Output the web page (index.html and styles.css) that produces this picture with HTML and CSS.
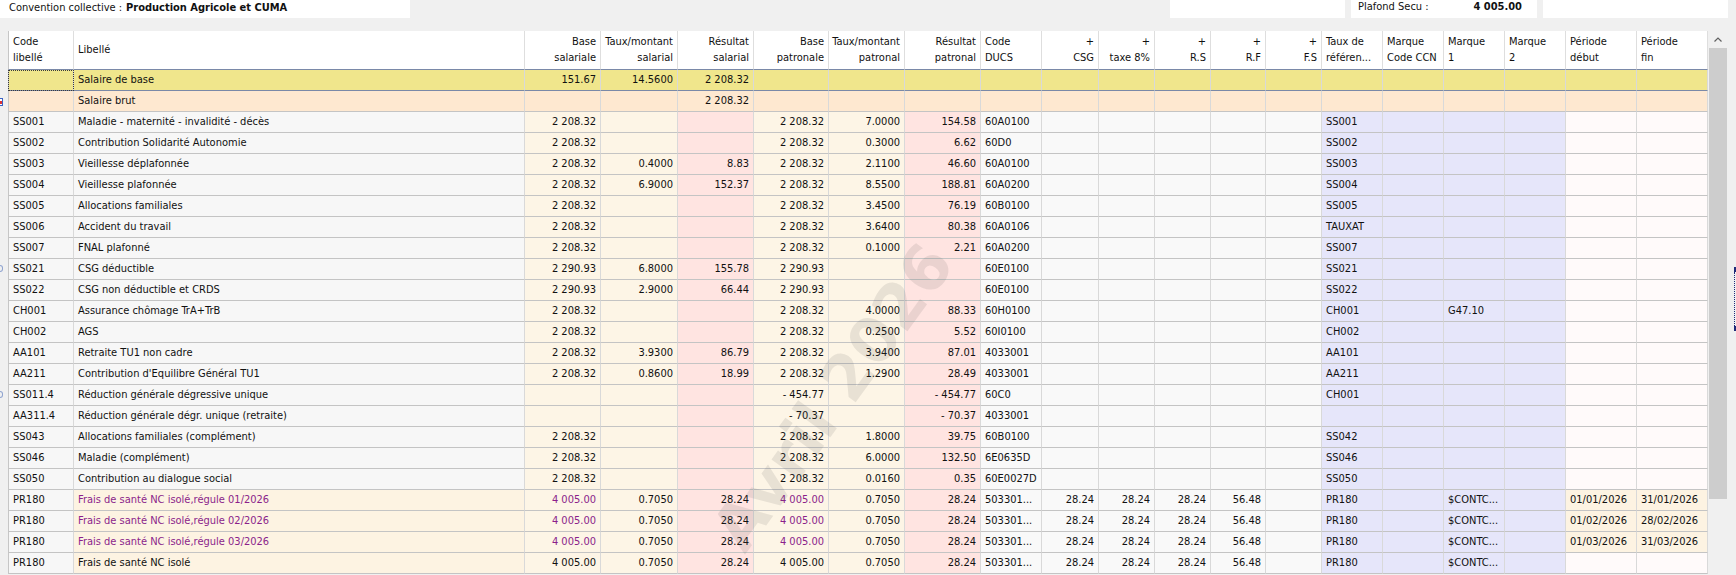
FILE: index.html
```html
<!DOCTYPE html>
<html lang="fr">
<head>
<meta charset="utf-8">
<title>Cotisations</title>
<link rel="stylesheet" href="styles.css">
</head>
<body>
<div class="top">
  <div class="box box-cc"><span class="lbl">Convention collective :</span><b>Production Agricole et CUMA</b></div>
  <div class="box box-a"></div>
  <div class="box box-b"><span class="lbl">Plafond Secu :</span><b class="val">4 005.00</b></div>
  <div class="box box-c"></div>
</div>
<div class="main">
  <div class="grid">
    <div class="row hdr"><div class="g"></div><div><div>Code<br>libellé</div></div><div><div>Libellé</div></div><div><div>Base<br>salariale</div></div><div><div>Taux/montant<br>salarial</div></div><div><div>Résultat<br>salarial</div></div><div><div>Base<br>patronale</div></div><div><div>Taux/montant<br>patronal</div></div><div><div>Résultat<br>patronal</div></div><div><div>Code<br>DUCS</div></div><div><div>+<br>CSG</div></div><div><div>+<br>taxe 8%</div></div><div><div>+<br>R.S</div></div><div><div>+<br>R.F</div></div><div><div>+<br>F.S</div></div><div><div>Taux de<br>référen...</div></div><div><div>Marque<br>Code CCN</div></div><div><div>Marque<br>1</div></div><div><div>Marque<br>2</div></div><div><div>Période<br>début</div></div><div><div>Période<br>fin</div></div></div>

    <div class="row sel"><span class="g"></span><span class="focus"></span><span>Salaire de base</span><span>151.67</span><span>14.5600</span><span>2 208.32</span><span></span><span></span><span></span><span></span><span></span><span></span><span></span><span></span><span></span><span></span><span></span><span></span><span></span><span></span><span></span></div>
    <div class="row brut"><span class="g"><b class="mk-box"></b></span><span></span><span>Salaire brut</span><span></span><span></span><span>2 208.32</span><span></span><span></span><span></span><span></span><span></span><span></span><span></span><span></span><span></span><span></span><span></span><span></span><span></span><span></span><span></span></div>
    <div class="row r"><span class="g"></span><span>SS001</span><span>Maladie - maternité - invalidité - décès</span><span>2 208.32</span><span></span><span></span><span>2 208.32</span><span>7.0000</span><span>154.58</span><span>60A0100</span><span></span><span></span><span></span><span></span><span></span><span>SS001</span><span></span><span></span><span></span><span></span><span></span></div>
    <div class="row r"><span class="g"></span><span>SS002</span><span>Contribution Solidarité Autonomie</span><span>2 208.32</span><span></span><span></span><span>2 208.32</span><span>0.3000</span><span>6.62</span><span>60D0</span><span></span><span></span><span></span><span></span><span></span><span>SS002</span><span></span><span></span><span></span><span></span><span></span></div>
    <div class="row r"><span class="g"></span><span>SS003</span><span>Vieillesse déplafonnée</span><span>2 208.32</span><span>0.4000</span><span>8.83</span><span>2 208.32</span><span>2.1100</span><span>46.60</span><span>60A0100</span><span></span><span></span><span></span><span></span><span></span><span>SS003</span><span></span><span></span><span></span><span></span><span></span></div>
    <div class="row r"><span class="g"></span><span>SS004</span><span>Vieillesse plafonnée</span><span>2 208.32</span><span>6.9000</span><span>152.37</span><span>2 208.32</span><span>8.5500</span><span>188.81</span><span>60A0200</span><span></span><span></span><span></span><span></span><span></span><span>SS004</span><span></span><span></span><span></span><span></span><span></span></div>
    <div class="row r"><span class="g"></span><span>SS005</span><span>Allocations familiales</span><span>2 208.32</span><span></span><span></span><span>2 208.32</span><span>3.4500</span><span>76.19</span><span>60B0100</span><span></span><span></span><span></span><span></span><span></span><span>SS005</span><span></span><span></span><span></span><span></span><span></span></div>
    <div class="row r"><span class="g"></span><span>SS006</span><span>Accident du travail</span><span>2 208.32</span><span></span><span></span><span>2 208.32</span><span>3.6400</span><span>80.38</span><span>60A0106</span><span></span><span></span><span></span><span></span><span></span><span>TAUXAT</span><span></span><span></span><span></span><span></span><span></span></div>
    <div class="row r"><span class="g"></span><span>SS007</span><span>FNAL plafonné</span><span>2 208.32</span><span></span><span></span><span>2 208.32</span><span>0.1000</span><span>2.21</span><span>60A0200</span><span></span><span></span><span></span><span></span><span></span><span>SS007</span><span></span><span></span><span></span><span></span><span></span></div>
    <div class="row r"><span class="g"><b class="mk-circ"></b></span><span>SS021</span><span>CSG déductible</span><span>2 290.93</span><span>6.8000</span><span>155.78</span><span>2 290.93</span><span></span><span></span><span>60E0100</span><span></span><span></span><span></span><span></span><span></span><span>SS021</span><span></span><span></span><span></span><span></span><span></span></div>
    <div class="row r"><span class="g"></span><span>SS022</span><span>CSG non déductible et CRDS</span><span>2 290.93</span><span>2.9000</span><span>66.44</span><span>2 290.93</span><span></span><span></span><span>60E0100</span><span></span><span></span><span></span><span></span><span></span><span>SS022</span><span></span><span></span><span></span><span></span><span></span></div>
    <div class="row r"><span class="g"></span><span>CH001</span><span>Assurance chômage TrA+TrB</span><span>2 208.32</span><span></span><span></span><span>2 208.32</span><span>4.0000</span><span>88.33</span><span>60H0100</span><span></span><span></span><span></span><span></span><span></span><span>CH001</span><span></span><span>G47.10</span><span></span><span></span><span></span></div>
    <div class="row r"><span class="g"></span><span>CH002</span><span>AGS</span><span>2 208.32</span><span></span><span></span><span>2 208.32</span><span>0.2500</span><span>5.52</span><span>60I0100</span><span></span><span></span><span></span><span></span><span></span><span>CH002</span><span></span><span></span><span></span><span></span><span></span></div>
    <div class="row r"><span class="g"></span><span>AA101</span><span>Retraite TU1 non cadre</span><span>2 208.32</span><span>3.9300</span><span>86.79</span><span>2 208.32</span><span>3.9400</span><span>87.01</span><span>4033001</span><span></span><span></span><span></span><span></span><span></span><span>AA101</span><span></span><span></span><span></span><span></span><span></span></div>
    <div class="row r"><span class="g"></span><span>AA211</span><span>Contribution d'Equilibre Général TU1</span><span>2 208.32</span><span>0.8600</span><span>18.99</span><span>2 208.32</span><span>1.2900</span><span>28.49</span><span>4033001</span><span></span><span></span><span></span><span></span><span></span><span>AA211</span><span></span><span></span><span></span><span></span><span></span></div>
    <div class="row r"><span class="g"><b class="mk-circ"></b></span><span>SS011.4</span><span>Réduction générale dégressive unique</span><span></span><span></span><span></span><span>- 454.77</span><span></span><span>- 454.77</span><span>60C0</span><span></span><span></span><span></span><span></span><span></span><span>CH001</span><span></span><span></span><span></span><span></span><span></span></div>
    <div class="row r"><span class="g"></span><span>AA311.4</span><span>Réduction générale dégr. unique (retraite)</span><span></span><span></span><span></span><span>- 70.37</span><span></span><span>- 70.37</span><span>4033001</span><span></span><span></span><span></span><span></span><span></span><span></span><span></span><span></span><span></span><span></span><span></span></div>
    <div class="row r"><span class="g"></span><span>SS043</span><span>Allocations familiales (complément)</span><span>2 208.32</span><span></span><span></span><span>2 208.32</span><span>1.8000</span><span>39.75</span><span>60B0100</span><span></span><span></span><span></span><span></span><span></span><span>SS042</span><span></span><span></span><span></span><span></span><span></span></div>
    <div class="row r"><span class="g"></span><span>SS046</span><span>Maladie (complément)</span><span>2 208.32</span><span></span><span></span><span>2 208.32</span><span>6.0000</span><span>132.50</span><span>6E0635D</span><span></span><span></span><span></span><span></span><span></span><span>SS046</span><span></span><span></span><span></span><span></span><span></span></div>
    <div class="row r"><span class="g"></span><span>SS050</span><span>Contribution au dialogue social</span><span>2 208.32</span><span></span><span></span><span>2 208.32</span><span>0.0160</span><span>0.35</span><span>60E0027D</span><span></span><span></span><span></span><span></span><span></span><span>SS050</span><span></span><span></span><span></span><span></span><span></span></div>
    <div class="row r"><span class="g"></span><span>PR180</span><span class="cr p">Frais de santé NC isolé,régule 01/2026</span><span class="p">4 005.00</span><span>0.7050</span><span>28.24</span><span class="p">4 005.00</span><span>0.7050</span><span>28.24</span><span>503301...</span><span>28.24</span><span>28.24</span><span>28.24</span><span>56.48</span><span></span><span>PR180</span><span></span><span>$CONTC...</span><span></span><span class="cr">01/01/2026</span><span class="cr">31/01/2026</span></div>
    <div class="row r"><span class="g"></span><span>PR180</span><span class="cr p">Frais de santé NC isolé,régule 02/2026</span><span class="p">4 005.00</span><span>0.7050</span><span>28.24</span><span class="p">4 005.00</span><span>0.7050</span><span>28.24</span><span>503301...</span><span>28.24</span><span>28.24</span><span>28.24</span><span>56.48</span><span></span><span>PR180</span><span></span><span>$CONTC...</span><span></span><span class="cr">01/02/2026</span><span class="cr">28/02/2026</span></div>
    <div class="row r"><span class="g"></span><span>PR180</span><span class="cr p">Frais de santé NC isolé,régule 03/2026</span><span class="p">4 005.00</span><span>0.7050</span><span>28.24</span><span class="p">4 005.00</span><span>0.7050</span><span>28.24</span><span>503301...</span><span>28.24</span><span>28.24</span><span>28.24</span><span>56.48</span><span></span><span>PR180</span><span></span><span>$CONTC...</span><span></span><span class="cr">01/03/2026</span><span class="cr">31/03/2026</span></div>
    <div class="row r"><span class="g"></span><span>PR180</span><span class="cr">Frais de santé NC isolé</span><span>4 005.00</span><span>0.7050</span><span>28.24</span><span>4 005.00</span><span>0.7050</span><span>28.24</span><span>503301...</span><span>28.24</span><span>28.24</span><span>28.24</span><span>56.48</span><span></span><span>PR180</span><span></span><span>$CONTC...</span><span></span><span></span><span></span></div>

    <div class="wm">Avril 2026</div>
  </div>
  <div class="sb">
    <div class="sb-up"><svg width="8" height="5" viewBox="0 0 8 5"><polyline points="0.5,4.5 4,1 7.5,4.5" fill="none" stroke="#606060" stroke-width="1.2"/></svg></div>
    <div class="sb-thumb"></div>
  </div>
  <div class="edge">
    <b class="edge-mk"></b>
    <b class="edge-dot"></b>
    <b class="edge-mk"></b>
  </div>
</div>
</body>
</html>
```
FILE: styles.css
```css
* { box-sizing: border-box; margin: 0; padding: 0; }
html, body { width: 1736px; height: 575px; overflow: hidden; }
body {
  background: #f0f0f0;
  font-family: "DejaVu Sans Condensed", "DejaVu Sans", sans-serif;
  font-size: 11px;
  color: #111;
}
b { font-weight: bold; }

/* top strip */
.top { height: 31px; display: flex; align-items: flex-start; }
.box { height: 18px; background: #fff; display: flex; align-items: flex-start; white-space: nowrap; line-height: 13px; overflow: hidden; }
.box-cc { width: 410px; padding: 1px 0 0 9px; }
.box-cc .lbl { display: inline-block; width: 117px; }
.box-a { margin-left: 760px; width: 175px; }
.box-b { margin-left: 6px; width: 186px; padding: 2px 15px 0 7px; justify-content: space-between; line-height: 10px; }
.box-c { margin-left: 6px; width: 185px; }

/* main */
.main { display: flex; height: 544px; }
.grid { position: relative; width: 1708px; flex: none; overflow: hidden; }

.row {
  display: grid;
  grid-template-columns: 8px 66px 451px 76px 77px 76px 75px 76px 76px 61px 57px 56px 56px 55px 56px 61px 61px 61px 61px 71px 71px;
  height: 21px;
}
.row > * {
  border-right: 1px solid #d9d9d9;
  border-bottom: 1px solid #c4c4c4;
  padding: 0 3px 0 4px;
  line-height: 20px;
  white-space: nowrap;
  overflow: hidden;
}
.row > :nth-child(2) { border-left: 1px solid #c6c6c6; }
.row > :nth-child(n+4):nth-child(-n+9),
.row > :nth-child(n+11):nth-child(-n+15) { text-align: right; padding: 0 4px 0 0; }

.row > .g { border: 0; padding: 0; background: #f0f0f0; display: flex; align-items: center; overflow: visible; }

/* header */
.hdr { height: 39px; }
.hdr > * {
  background: #fff;
  border-right-color: #dedede;
  border-bottom-color: #7a89a8;
  display: flex;
  align-items: center;
  line-height: 16px;
  overflow: visible;
}
.hdr > :nth-child(n+4):nth-child(-n+9),
.hdr > :nth-child(n+11):nth-child(-n+15) { justify-content: flex-end; }

/* column backgrounds */
.r > :nth-child(2), .r > :nth-child(3) { background: #f7f7f7; }
.r > :nth-child(4), .r > :nth-child(5), .r > :nth-child(7), .r > :nth-child(8) { background: #fdf5e6; }
.r > :nth-child(6), .r > :nth-child(9) { background: #ffe4e1; }
.r > :nth-child(n+10):nth-child(-n+15) { background: #f9f9f9; }
.r > :nth-child(n+16):nth-child(-n+19) { background: #e6e6fa; }
.r > :nth-child(20), .r > :nth-child(21) { background: #fffafa; }
.r > .cr { background: #fdf3e2; }
.p { color: #8b1f8b; }

/* selected + gross rows */
.sel > * { background: #f0e68c; border-bottom-color: #7a89a8; }
.brut > * { background: #fee8d0; }
.focus { outline: 1px dotted #3a3a3a; outline-offset: -1px; }

/* gutter markers */
.mk-box { display: block; width: 3px; height: 8px; border: 1px solid #3b62c4; border-left: 0; background: linear-gradient(#fff 0 2px, #d33 2px 5px, #fff 5px); }
.mk-circ { display: block; width: 3px; height: 7px; border: 1px solid #8fa3cf; border-left: 0; border-radius: 0 4px 4px 0; margin-top: -2px; }

/* watermark */
.wm {
  position: absolute;
  left: 833px;
  top: 366px;
  transform: translate(-50%, -50%) rotate(-54deg);
  font-family: "DejaVu Sans", sans-serif;
  font-weight: bold;
  font-size: 63px;
  color: rgba(90, 90, 90, 0.13);
  white-space: nowrap;
  pointer-events: none;
}

/* scrollbar */
.sb { width: 20px; flex: none; background: #f0f0f0; padding-left: 1px; display: flex; flex-direction: column; }
.sb-up { width: 18px; height: 17px; display: flex; align-items: center; justify-content: center; }
.sb-thumb { width: 18px; height: 451px; background: #cdcdcd; }

.edge { width: 8px; flex: none; display: flex; flex-direction: column; align-items: flex-end; padding-top: 236px; }
.edge-mk { display: block; width: 2px; height: 5px; background: #1f2a78; }
.edge-dot { display: block; width: 2px; height: 54px; border-left: 1px dotted #1f2a78; }
```
